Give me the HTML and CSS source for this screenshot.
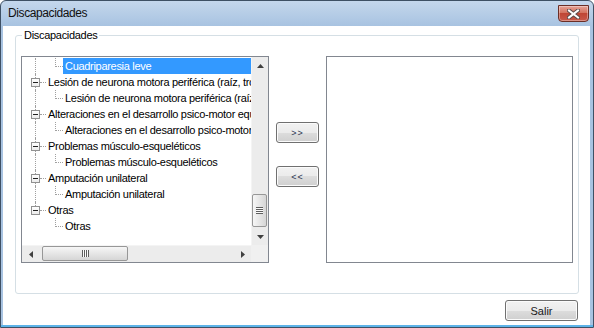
FILE: index.html
```html
<!DOCTYPE html>
<html lang="es">
<head>
  <meta charset="UTF-8">
  <title>Discapacidades</title>
  <link rel="stylesheet" href="styles.css">
</head>
<body>

  <div class="window">
    <div class="titlebar">
      <span class="title">Discapacidades</span>
      <button class="close-btn">
        <svg width="13" height="10" viewBox="0 0 13 10">
          <path d="M2 1.5 L11 8.5 M11 1.5 L2 8.5" stroke="#5b4a4a" stroke-width="4" stroke-linecap="square"/>
          <path d="M2 1.5 L11 8.5 M11 1.5 L2 8.5" stroke="#fff" stroke-width="2" stroke-linecap="square"/>
        </svg>
      </button>
    </div>

    <div class="client">
      <div class="group">
        <span class="group-title">Discapacidades</span>

        <!-- arbol de discapacidades -->
        <div class="tree">
          <div class="tree-view">
            <div class="node child selected"><span class="elbow"></span><span class="label">Cuadriparesia leve</span></div>
            <div class="node root"><span class="toggle"></span><span class="dash"></span><span class="label">Lesión de neurona motora periférica (raíz, tronco o nervio)</span></div>
            <div class="node child"><span class="elbow"></span><span class="label">Lesión de neurona motora periférica (raíz, tronco o nervio)</span></div>
            <div class="node root"><span class="toggle"></span><span class="dash"></span><span class="label">Alteraciones en el desarrollo psico-motor equivalentes</span></div>
            <div class="node child"><span class="elbow"></span><span class="label">Alteraciones en el desarrollo psico-motor equivalentes</span></div>
            <div class="node root"><span class="toggle"></span><span class="dash"></span><span class="label">Problemas músculo-esqueléticos</span></div>
            <div class="node child"><span class="elbow"></span><span class="label">Problemas músculo-esqueléticos</span></div>
            <div class="node root"><span class="toggle"></span><span class="dash"></span><span class="label">Amputación unilateral</span></div>
            <div class="node child"><span class="elbow"></span><span class="label">Amputación unilateral</span></div>
            <div class="node root last"><span class="toggle"></span><span class="dash"></span><span class="label">Otras</span></div>
            <div class="node child end"><span class="elbow"></span><span class="label">Otras</span></div>
          </div>

          <div class="vscroll">
            <span class="sb-btn"><svg width="7" height="4"><polygon points="3.5,0 7,4 0,4" fill="#404040"/></svg></span>
            <div class="sb-track">
              <span class="thumb-v"><span class="grip-v"></span></span>
            </div>
            <span class="sb-btn"><svg width="7" height="4"><polygon points="0,0 7,0 3.5,4" fill="#404040"/></svg></span>
          </div>

          <div class="hscroll">
            <span class="sb-btn"><svg width="4" height="7"><polygon points="0,3.5 4,0 4,7" fill="#404040"/></svg></span>
            <div class="sb-track">
              <span class="thumb-h"><span class="grip-h"></span></span>
            </div>
            <span class="sb-btn"><svg width="4" height="7"><polygon points="0,0 4,3.5 0,7" fill="#404040"/></svg></span>
          </div>

          <div class="corner"></div>
        </div>

        <div class="move-btns">
          <button class="btn small">&gt;&gt;</button>
          <button class="btn small">&lt;&lt;</button>
        </div>

        <div class="list"></div>
      </div>

      <div class="footer">
        <button class="btn salir">Salir</button>
      </div>
    </div>
  </div>

</body>
</html>
```

FILE: styles.css
```css
body {
  margin: 0;
  font-family: 'Liberation Sans', Arial, sans-serif;
  font-size: 11px;
  color: #000;
  background: #fff;
}

.window {
  width: 594px;
  height: 328px;
  box-sizing: border-box;
  border: 1px solid #3e5064;
  border-radius: 6px 6px 0 0;
  background: linear-gradient(#c4d7ec, #a8c3e1 25px, #a8c3e1 calc(100% - 2px), #5db3e8 calc(100% - 2px));
  display: flex;
  flex-direction: column;
}

.titlebar {
  height: 25px;
  flex: none;
  display: flex;
  align-items: flex-start;
}
.title {
  padding-left: 7px;
  font-size: 12px;
  line-height: 25px;
  letter-spacing: -0.4px;
  color: #111;
}
.close-btn {
  margin: 4px 4px 0 auto;
  width: 31px;
  height: 17px;
  padding: 0;
  border: 1px solid #6b2e26;
  border-radius: 0 0 4px 4px;
  background: linear-gradient(#e6a296, #d4735f 45%, #c04634 50%, #c8594a);
  box-shadow: inset 0 0 0 1px rgba(255,255,255,0.35);
  display: flex;
  align-items: center;
  justify-content: center;
}

.client {
  flex: 1;
  background: #fff;
  margin: 0 3px 2px 2px;
  display: flex;
  flex-direction: column;
}

.group {
  position: relative;
  margin: 9px 0 0 12px;
  width: 564px;
  height: 259px;
  box-sizing: border-box;
  border: 1px solid #d5dfe5;
  border-radius: 3px;
  padding: 20px 5px 0;
  display: flex;
  align-items: flex-start;
}
.group-title {
  position: absolute;
  top: -7px;
  left: 6px;
  padding: 0 2px;
  line-height: 13px;
  background: #fff;
  letter-spacing: -0.3px;
}

.tree {
  width: 248px;
  height: 207px;
  box-sizing: border-box;
  border: 1px solid #828790;
  display: grid;
  grid-template-columns: 1fr 17px;
  grid-template-rows: 1fr 17px;
  flex: none;
}
.tree-view {
  overflow: hidden;
  padding-top: 1px;
  background: #fff;
}
.node {
  position: relative;
  display: flex;
  height: 16px;
  line-height: 16px;
  white-space: nowrap;
  letter-spacing: -0.3px;
}
.node::before {
  content: '';
  position: absolute;
  left: 13px;
  top: 0;
  bottom: 0;
  border-left: 1px dotted #a0a0a0;
}
.node.last::before { bottom: 8px; }
.node.end::before { display: none; }

.toggle {
  position: relative;
  flex: none;
  margin: 4px 0 0 9px;
  width: 9px;
  height: 9px;
  box-sizing: border-box;
  border: 1px solid #919191;
  background: linear-gradient(#fff, #ececec);
}
.toggle::after {
  content: '';
  position: absolute;
  left: 1px;
  top: 3px;
  width: 5px;
  height: 1px;
  background: #222;
}
.dash {
  flex: none;
  width: 6px;
  height: 9px;
  box-sizing: border-box;
  border-bottom: 1px dotted #a0a0a0;
}
.elbow {
  flex: none;
  margin-left: 33px;
  width: 8px;
  height: 9px;
  box-sizing: border-box;
  border-left: 1px dotted #a0a0a0;
  border-bottom: 1px dotted #a0a0a0;
}
.label {
  padding: 0 2px;
}
.selected .label {
  flex: 1;
  background: #3399ff;
  color: #fff;
}

.vscroll, .hscroll {
  display: flex;
  background: #ececec;
}
.vscroll {
  flex-direction: column;
  border-left: 1px solid #f4f4f4;
}
.hscroll {
  border-top: 1px solid #f4f4f4;
  height: 16px;
}
.sb-btn {
  flex: none;
  width: 17px;
  height: 17px;
  display: flex;
  align-items: center;
  justify-content: center;
}
.vscroll .sb-btn { width: 16px; }
.hscroll .sb-btn { height: 16px; }
.sb-track {
  flex: 1;
  display: flex;
  flex-direction: column;
}
.hscroll .sb-track { flex-direction: row; }

.thumb-v {
  margin: 120px 0 0 0;
  width: 15px;
  height: 33px;
  box-sizing: border-box;
  border: 1px solid #979797;
  border-radius: 2px;
  background: linear-gradient(to right, #f6f6f6, #e6e6e6 50%, #d6d6d6);
  display: flex;
  align-items: center;
  justify-content: center;
}
.grip-v {
  width: 7px;
  height: 7px;
  background: repeating-linear-gradient(#5e5e5e 0 1px, #fbfbfb 1px 2px);
}
.thumb-h {
  margin: 0 0 0 3px;
  width: 86px;
  height: 15px;
  box-sizing: border-box;
  border: 1px solid #979797;
  border-radius: 2px;
  background: linear-gradient(#f6f6f6, #e6e6e6 50%, #d6d6d6);
  display: flex;
  align-items: center;
  justify-content: center;
}
.grip-h {
  width: 7px;
  height: 7px;
  background: repeating-linear-gradient(to right, #5e5e5e 0 1px, #fbfbfb 1px 2px);
}
.corner {
  background: #f0f0f0;
}

.move-btns {
  flex: none;
  display: flex;
  flex-direction: column;
  gap: 23px;
  margin: 0 7px;
  padding-top: 66px;
}

.btn {
  font-family: 'Liberation Sans', Arial, sans-serif;
  font-size: 11px;
  color: #1a1a1a;
  padding: 0;
  border: 1px solid #707070;
  border-radius: 3px;
  background: linear-gradient(#f2f2f2, #ebebeb 50%, #dddddd 50%, #cfcfcf);
  box-shadow: inset 0 0 0 1px #fbfbfb;
}
.btn.small {
  width: 43px;
  height: 21px;
  font-size: 9px;
  letter-spacing: 1px;
  color: #2a3550;
}

.list {
  flex: none;
  width: 247px;
  height: 207px;
  box-sizing: border-box;
  border: 1px solid #828790;
}

.footer {
  display: flex;
  justify-content: flex-end;
  margin-top: 6px;
  padding-right: 12px;
}
.btn.salir {
  width: 73px;
  height: 21px;
}
```
